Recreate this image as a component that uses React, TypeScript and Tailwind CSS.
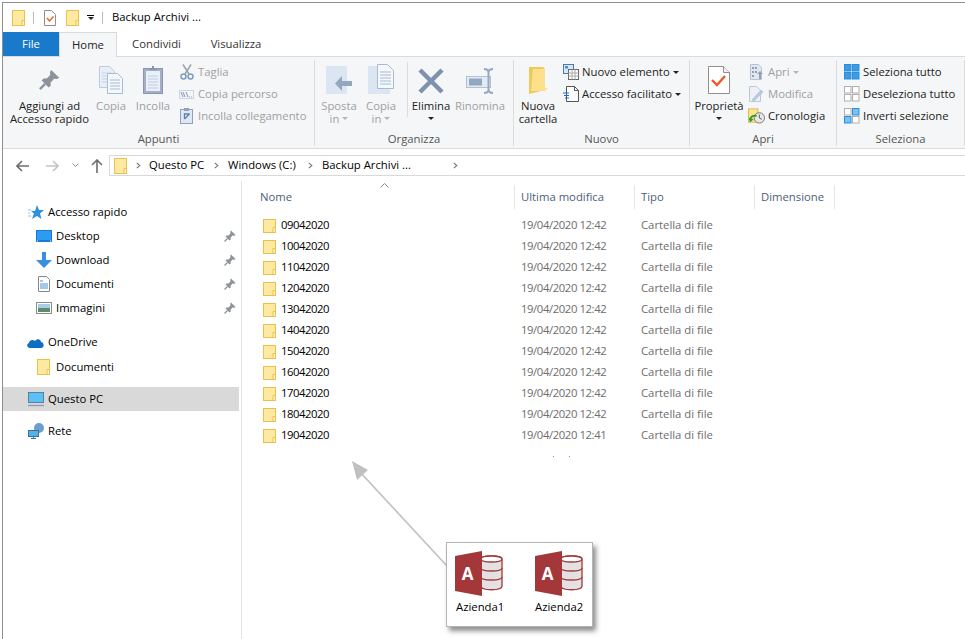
const FONT = "font-['Open_Sans',sans-serif]";

const files = [
  ["09042020", "12:42"],
  ["10042020", "12:42"],
  ["11042020", "12:42"],
  ["12042020", "12:42"],
  ["13042020", "12:42"],
  ["14042020", "12:42"],
  ["15042020", "12:42"],
  ["16042020", "12:42"],
  ["17042020", "12:42"],
  ["18042020", "12:42"],
  ["19042020", "12:41"],
];

const Folder = ({ w = 13, h = 15 }: { w?: number; h?: number }) => (
  <svg width={w} height={h} viewBox={`0 0 13 ${h}`} className="shrink-0">
    <rect x="0.5" y="0.5" width="12" height={h - 1} fill="#fde9a0" stroke="#eac14f" />
    <path d={`M10 ${h - 5.500}h2.500v5H10z`} fill="#fff3c4" stroke="#eac14f" />
  </svg>
);

const Caret = () => <span className="inline-block border-x-[3px] border-t-[3px] border-x-transparent border-t-[#222]" />;
const GrayCaret = () => <span className="inline-block border-x-[3px] border-t-[3px] border-x-transparent border-t-[#b5b5b5]" />;

const Chevron = () => (
  <svg width="5" height="7" viewBox="0 0 5 7" className="shrink-0">
    <path d="m.8.800 3 2.700-3 2.700" fill="none" stroke="#777" strokeWidth="1.100" />
  </svg>
);

const Pin = ({ size = 12, color = "#8d939b" }: { size?: number; color?: string }) => (
  <svg width={size} height={size} viewBox="0 0 12 12">
    <path d="M7 0.5 11.5 5 10.3 5.700 8.600 5.600 6.600 7.800 6.700 9.600 5.500 10.500 1.500 6.500 2.600 5.400 4.400 5.400 6.400 3.400 6.300 1.700Z" fill={color} />
    <path d="M3.500 8.500 0.500 11.500" stroke={color} strokeWidth="1.300" />
  </svg>
);

const Doc = () => (
  <svg width="22" height="28" viewBox="0 0 22 28">
    <path d="M.5.500h15l6 6v21H.5z" fill="#fff" stroke="#8f8f8f" />
    <path d="M15.500.500v6h6" fill="#f1f1f1" stroke="#8f8f8f" />
    <path d="m4 14 5 5 8-9" fill="none" stroke="#ee5a22" strokeWidth="2.400" />
  </svg>
);

const SmallDocCheck = () => (
  <svg width="12" height="16" viewBox="0 0 12 16">
    <path d="M.5.500h7l4 4v11H.5z" fill="#fff" stroke="#8f8f8f" />
    <path d="m3 8 2.500 3L9.500 6.500" fill="none" stroke="#ee5a22" strokeWidth="1.400" />
  </svg>
);

const Copy = () => (
  <svg width="24" height="28" viewBox="0 0 24 28">
    <path d="M.5.500h10l5 5v16H.5z" fill="#e8eef7" stroke="#bccada" />
    <path d="M3 7h9M3 10h9M3 13h9M3 16h9" stroke="#c6d3e4" />
    <path d="M8.500 7.500h10l5 5v15h-15z" fill="#f4f7fb" stroke="#a9bbd1" />
    <path d="M11 14h10M11 17h10M11 20h10M11 23h10" stroke="#a9bbd1" />
  </svg>
);

const Paste = () => (
  <svg width="20" height="29" viewBox="0 0 20 29">
    <rect x="0.500" y="3.500" width="19" height="25" fill="#a3afc4" stroke="#8996ad" />
    <rect x="3" y="6" width="14" height="20" fill="#eaf0f9" />
    <path d="M5 11h10M5 14h10M5 17h10M5 20h10M5 23h10" stroke="#bccce2" />
    <path d="M6 5V3h3V1h2v2h3v2z" fill="#8996ad" />
  </svg>
);

const Scissors = () => (
  <svg width="14" height="16" viewBox="0 0 14 16">
    <path d="M3 .500 9 10M11 .500 5 10" stroke="#9aa3b0" strokeWidth="1.500" fill="none" />
    <circle cx="3.500" cy="12.500" r="2.500" fill="none" stroke="#7d9cc0" strokeWidth="1.500" />
    <circle cx="10.500" cy="12.500" r="2.500" fill="none" stroke="#7d9cc0" strokeWidth="1.500" />
  </svg>
);

const PathIcon = () => (
  <svg width="15" height="9" viewBox="0 0 15 9">
    <rect width="15" height="9" fill="#c9d6e8" />
    <rect x="1" y="1" width="13" height="7" fill="#f2f5fa" />
    <path d="M2 2 4 7M4 2 6 7M7 2 9 7M10 7h.8M12 7h.8" stroke="#7b8ca5" strokeWidth=".9" />
  </svg>
);

const PasteLink = () => (
  <svg width="13" height="16" viewBox="0 0 13 16">
    <rect x="0.500" y="1.500" width="12" height="14" fill="#dfe7f2" stroke="#93a2b8" />
    <rect x="4" y="0" width="5" height="3" fill="#93a2b8" />
    <path d="M4.500 11V6h5" fill="none" stroke="#5e7fa8" strokeWidth="1.300" />
    <path d="m4.500 11 5-5" stroke="#5e7fa8" strokeWidth="1.300" />
  </svg>
);

const MoveTo = () => (
  <svg width="26" height="28" viewBox="0 0 26 28">
    <rect width="21" height="28" fill="#dce6f3" />
    <path d="M26 15H16v-5L9 17.500 16 25v-5h10z" fill="#94a7c0" />
  </svg>
);

const CopyTo = () => (
  <svg width="26" height="30" viewBox="0 0 26 30">
    <rect y="2" width="22" height="28" fill="#dce6f3" />
    <path d="M9.500.500h10l6 6v18h-16z" fill="#f4f7fb" stroke="#a9bbd1" />
    <path d="M12 8h11M12 11h11M12 14h11M12 17h11M12 20h11" stroke="#a9bbd1" />
  </svg>
);

const Rename = () => (
  <svg width="29" height="26" viewBox="0 0 29 26">
    <rect x="0.500" y="8.500" width="24" height="11" fill="#e3eaf4" stroke="#b3c0d2" />
    <rect x="3" y="10.500" width="13" height="7" fill="#94a7c0" />
    <path d="M18 1c3 0 4 1 4.500 2.500C23 2 24 1 27 1M22.500 3v19M18 25c3 0 4-1 4.500-2.500.5 1.500 1.500 2.500 4.500 2.500" fill="none" stroke="#94a7c0" strokeWidth="2" />
  </svg>
);

const NewItem = () => (
  <svg width="16" height="16" viewBox="0 0 16 16">
    <rect x="0.500" y="0.500" width="10" height="9" fill="#d7e7f7" stroke="#4d7ba8" />
    <rect x="2" y="2" width="3" height="2.500" fill="#4d90d0" />
    <rect x="5.500" y="5.500" width="10" height="10" fill="#fff" stroke="#666" />
    <path d="M5.500 9h10M5.500 12h10M9 5.500v10M12 5.500v10" stroke="#aaa" />
  </svg>
);

const EasyAccess = () => (
  <svg width="16" height="16" viewBox="0 0 16 16">
    <path d="M3.500.500h8l4 4v11h-12z" fill="#fff" stroke="#555" />
    <path d="M11.500.500v4h4" fill="none" stroke="#555" />
    <path d="M0 7h6M1 9.500h5M2 12h4" stroke="#1d6fc4" strokeWidth="1.100" />
  </svg>
);

const OpenIcon = () => (
  <svg width="13" height="16" viewBox="0 0 13 16">
    <path d="M.500.500h8l3 3v12h-11z" fill="#e3e8f0" stroke="#b8c3d2" />
    <path d="M2 3h2v2H2zM5 3h2v2H5zM2 7h2v2H2zM2 11h2v2H2zM5 7h2v2H5z" fill="#8fa0b7" />
    <path d="M9 15V10H7l3-3 3 3h-2v5z" fill="#8fa0b7" />
  </svg>
);

const EditIcon = () => (
  <svg width="15" height="16" viewBox="0 0 15 16">
    <path d="M.500.500h7l4 4v11h-11z" fill="#edf1f7" stroke="#bcc8d8" />
    <path d="M3 14 12 4l2 2-9 9z" fill="#b6cbe4" stroke="#9cb3cf" strokeWidth=".5" />
  </svg>
);

const HistoryIcon = () => (
  <svg width="18" height="16" viewBox="0 0 18 16">
    <rect x="0.500" y="0.500" width="10" height="14" fill="#fde58f" stroke="#d9b64d" />
    <circle cx="12" cy="10" r="5.500" fill="#e8e8e8" stroke="#777" />
    <path d="M12 6.500V10l2.500 1.500" stroke="#555" fill="none" />
    <path d="M2 12c1-4 4-5 7-4" stroke="#2e9e2e" strokeWidth="2" fill="none" />
    <path d="m2 15-1-5 5 1.500z" fill="#2e9e2e" />
  </svg>
);

const Grid = ({ cells }: { cells: string[] }) => (
  <svg width="16" height="16" viewBox="0 0 16 16">
    {cells.map((c, i) => {
      const x = i % 2 ? 8.500 : 0.500;
      const y = i < 2 ? 0.500 : 8.500;
      return <rect key={i} x={x} y={y} width="6.500" height="6.500" fill={c} stroke={c === "#fff" ? "#b0b0b0" : "#2b8fdf"} />;
    })}
  </svg>
);

const AccessFile = () => (
  <svg width="48" height="45" viewBox="0 0 48 45">
    <path d="M26 8c0-4 21-4 21 0v27c0 5-21 5-21 0z" fill="#e2e2e2" stroke="#a4373a" strokeWidth="1.300" />
    <path d="M26 8c0 4 21 4 21 0s-21-4-21 0z" fill="#fff" stroke="#a4373a" strokeWidth="1.300" />
    <path d="M26 17c0 4 21 4 21 0M26 26c0 4 21 4 21 0" fill="none" stroke="#a4373a" strokeWidth="1.300" />
    <path d="M0 5 27 0v45L0 40z" fill="#a4373a" />
    <text x="12.500" y="29" textAnchor="middle" fill="#fff" fontFamily="Open Sans" fontWeight="700" fontSize="17">A</text>
  </svg>
);

function RibbonLarge({ icon, lines, dim, caret, className }: { icon: React.ReactNode; lines: string[]; dim?: boolean; caret?: React.ReactNode; className: string }) {
  return (
    <div className={`flex flex-col items-center shrink-0 ${className}`}>
      <div className="h-[34px] flex items-end justify-center">{icon}</div>
      <div className={`mt-[5px] text-center leading-[13px] ${dim ? "text-[#9f9f9f]" : "text-[#222]"}`}>
        {lines.map((l, i) => (
          <div key={l} className="whitespace-nowrap flex items-center justify-center gap-[3px]">
            {l}
            {i === lines.length - 1 && lines.length > 1 && caret}
          </div>
        ))}
        {lines.length === 1 && caret && <div className="flex justify-center h-[13px] items-center">{caret}</div>}
      </div>
    </div>
  );
}

function RibbonSmall({ icon, label, dim, caret }: { icon: React.ReactNode; label: string; dim?: boolean; caret?: React.ReactNode }) {
  return (
    <div className={`h-[22px] flex items-center gap-[3px] whitespace-nowrap ${dim ? "text-[#9f9f9f]" : "text-[#222]"}`}>
      <span className="w-[17px] flex justify-center">{icon}</span>
      {label}
      {caret && <span className="flex">{caret}</span>}
    </div>
  );
}

function Group({ label, width, children }: { label: string; width: string; children: React.ReactNode }) {
  return (
    <div className={`${width} h-[86px] mt-[3px] border-r border-[#dcdcdc] flex flex-col shrink-0`}>
      <div className="h-[70px] flex shrink-0">{children}</div>
      <div className="text-center text-[#555] leading-[18px] shrink-0">{label}</div>
    </div>
  );
}

function NavRow({ icon, label, pin, sub, selected, className = "" }: { icon: React.ReactNode; label: string; pin?: boolean; sub?: boolean; selected?: boolean; className?: string }) {
  return (
    <div className={`h-6 flex items-center shrink-0 ${sub ? "pl-[32px]" : "pl-[24px]"} ${selected ? "bg-[#d9d9d9]" : ""} ${className}`}>
      <span className="w-[17px] flex justify-center mr-[4px]">{icon}</span>
      <span className="text-black flex-1">{label}</span>
      {pin && <span className="mr-[3px] flex"><Pin /></span>}
    </div>
  );
}

export default function App() {
  return (
    <div className={`${FONT} relative w-[965px] h-[639px] overflow-hidden bg-white pl-[2px] pt-[2px] text-[11.3px]`}>
      <div className="h-full border-l border-t border-[#8f8f8f] flex flex-col">
        <div className="h-[29px] flex items-center pl-[9px] shrink-0">
          <Folder w={13} h={16} />
          <span className="ml-[8px] w-px h-3 bg-[#bbb]" />
          <span className="ml-[10px] flex"><SmallDocCheck /></span>
          <span className="ml-[10px] flex"><Folder w={13} h={16} /></span>
          <span className="ml-[8px] flex flex-col items-center gap-[1px]">
            <span className="w-[7px] h-px bg-black" />
            <Caret />
          </span>
          <span className="ml-[8px] w-px h-3 bg-[#bbb]" />
          <span className="ml-[9px] text-black">Backup Archivi ...</span>
        </div>

        <div className="h-[24px] flex shrink-0">
          <div className="w-[56px] bg-[#1979ca] text-white flex items-center justify-center">File</div>
          <div className="w-[58px] border-x border-t border-[#dadbdc] bg-[#f5f6f7] -mb-px z-10 flex items-center justify-center text-[#222]">Home</div>
          <div className="w-[79px] flex items-center justify-center text-[#333]">Condividi</div>
          <div className="w-[80px] flex items-center justify-center text-[#333]">Visualizza</div>
        </div>

        <div className="h-[93px] bg-[#f5f6f7] border-y border-[#dadbdc] flex shrink-0">
          <Group label="Appunti" width="w-[312px]">
            <RibbonLarge icon={<span className="mb-[4px] flex"><Pin size={21} /></span>} lines={["Aggiungi ad", "Accesso rapido"]} className="w-[93px]" />
            <RibbonLarge icon={<Copy />} lines={["Copia"]} dim className="w-[30px]" />
            <RibbonLarge icon={<Paste />} lines={["Incolla"]} dim className="w-[40px] ml-[7px]" />
            <div className="ml-[5px] mt-[1px] flex flex-col">
              <RibbonSmall icon={<Scissors />} label="Taglia" dim />
              <RibbonSmall icon={<PathIcon />} label="Copia percorso" dim />
              <RibbonSmall icon={<PasteLink />} label="Incolla collegamento" dim />
            </div>
          </Group>
          <Group label="Organizza" width="w-[199px]">
            <RibbonLarge icon={<MoveTo />} lines={["Sposta", "in"]} dim caret={<GrayCaret />} className="w-[44px] ml-[2px]" />
            <RibbonLarge icon={<CopyTo />} lines={["Copia", "in"]} dim caret={<GrayCaret />} className="w-[40px]" />
            <span className="w-px h-[55px] bg-[#dcdcdc] ml-[6px] mt-[2px]" />
            <RibbonLarge icon={<svg width="26" height="26" viewBox="0 0 26 26"><path d="m2 2 22 22M24 2 2 24" stroke="#7f92ad" strokeWidth="4.500" /></svg>} lines={["Elimina"]} caret={<Caret />} className="w-[46px]" />
            <RibbonLarge icon={<Rename />} lines={["Rinomina"]} dim className="w-[52px]" />
          </Group>
          <Group label="Nuovo" width="w-[176px]">
            <RibbonLarge icon={<svg width="19" height="27" viewBox="0 0 19 27"><path d="M0 0h14l2 2v21l-16 4z" fill="#eec95f" /><path d="M4 2h12v19h3l-3 3H2z" fill="#fde08a" /></svg>} lines={["Nuova", "cartella"]} className="w-[44px] ml-[2px]" />
            <div className="ml-[2px] mt-[1px] flex flex-col">
              <RibbonSmall icon={<NewItem />} label="Nuovo elemento" caret={<Caret />} />
              <RibbonSmall icon={<EasyAccess />} label="Accesso facilitato" caret={<Caret />} />
            </div>
          </Group>
          <Group label="Apri" width="w-[147px]">
            <RibbonLarge icon={<Doc />} lines={["Proprietà"]} caret={<Caret />} className="w-[54px] ml-[2px]" />
            <div className="ml-[2px] mt-[1px] flex flex-col">
              <RibbonSmall icon={<OpenIcon />} label="Apri" dim caret={<GrayCaret />} />
              <RibbonSmall icon={<EditIcon />} label="Modifica" dim />
              <RibbonSmall icon={<HistoryIcon />} label="Cronologia" />
            </div>
          </Group>
          <Group label="Seleziona" width="w-[128px]">
            <div className="ml-[6px] mt-[1px] flex flex-col">
              <RibbonSmall icon={<Grid cells={["#3f9ae6", "#3f9ae6", "#3f9ae6", "#3f9ae6"]} />} label="Seleziona tutto" />
              <RibbonSmall icon={<Grid cells={["#fff", "#fff", "#fff", "#fff"]} />} label="Deseleziona tutto" />
              <RibbonSmall icon={<Grid cells={["#fff", "#7cc0f0", "#7cc0f0", "#fff"]} />} label="Inverti selezione" />
            </div>
          </Group>
        </div>

        <div className="h-[6px] shrink-0" />
        <div className="h-[21px] flex items-center shrink-0">
          <div className="w-[106px] flex items-center pl-[13px] shrink-0">
            <svg width="13" height="12" viewBox="0 0 13 12"><path d="M6 1 1 6l5 5M1 6h12" fill="none" stroke="#6d6d6d" strokeWidth="1.600" /></svg>
            <svg className="ml-[17px]" width="13" height="12" viewBox="0 0 13 12"><path d="m7 1 5 5-5 5M12 6H0" fill="none" stroke="#c4c4c4" strokeWidth="1.600" /></svg>
            <svg className="ml-[13px]" width="7" height="5" viewBox="0 0 7 5"><path d="m.5.500 3 3 3-3" fill="none" stroke="#909090" /></svg>
            <svg className="ml-[12px]" width="12" height="14" viewBox="0 0 12 14"><path d="M1 6l5-5 5 5M6 1v13" fill="none" stroke="#6d6d6d" strokeWidth="1.600" /></svg>
          </div>
          <div className="flex-1 h-[21px] border-y border-l border-[#d9d9d9] flex items-center pl-[4px] text-black">
            <Folder w={13} h={16} />
            <span className="ml-[9px] flex"><Chevron /></span>
            <span className="ml-[8px] w-[65px]">Questo PC</span>
            <Chevron />
            <span className="ml-[9px] w-[80px]">Windows (C:)</span>
            <Chevron />
            <span className="ml-[9px] w-[131px]">Backup Archivi ...</span>
            <Chevron />
          </div>
        </div>

        <div className="flex-1 flex min-h-0 mt-[5px]">
          <div className="w-[239px] border-r border-[#e5e5e5] pt-[19px] shrink-0 flex flex-col">
            <div className="w-[236px] flex flex-col">
              <NavRow label="Accesso rapido" icon={
                <svg width="16" height="15" viewBox="0 0 16 15"><path d="m9 0 2 5h5l-4 3.500L13.500 14 9 11l-5 3 2-5.500L3 6h4z" fill="#2f8fe0" /><path d="M0 5h3M0 8h2M0 11h3" stroke="#8cc4f0" /></svg>
              } />
              <NavRow sub label="Desktop" pin icon={
                <svg width="16" height="12" viewBox="0 0 16 12"><rect width="16" height="12" fill="#1e78d8" /><rect x="1" y="1" width="14" height="9" fill="#2c9cf2" /><path d="M1 11h1M14 11h1" stroke="#fff" /></svg>
              } />
              <NavRow sub label="Download" pin icon={
                <svg width="16" height="16" viewBox="0 0 16 16"><path d="M6 0h4v8h6l-8 8-8-8h6z" fill="#3a8ee0" /></svg>
              } />
              <NavRow sub label="Documenti" pin icon={
                <svg width="12" height="16" viewBox="0 0 12 16"><path d="M.5.500h8l3 3v12H.5z" fill="#fff" stroke="#8a8a8a" /><path d="M2 5h3M2 8h8M2 10h8M2 12h8" stroke="#4d8fd0" /></svg>
              } />
              <NavRow sub label="Immagini" pin icon={
                <svg width="16" height="12" viewBox="0 0 16 12"><rect x="0.500" y="0.500" width="15" height="11" fill="#fff" stroke="#8a8a8a" /><rect x="2" y="2" width="12" height="4" fill="#a8cde8" /><rect x="2" y="6" width="12" height="4" fill="#5e8a6e" /></svg>
              } />
              <NavRow className="mt-[10px]" label="OneDrive" icon={
                <svg width="17" height="11" viewBox="0 0 17 11"><path d="M3 11C0 11-1 7 2 6c0-3 4-4 6-2 2-3 6-2 6 1 3 0 4 6 0 6z" fill="#0d6fc4" /></svg>
              } />
              <NavRow className="mt-px" sub label="Documenti" icon={<Folder w={13} h={16} />} />
              <NavRow className="mt-[8px]" selected label="Questo PC" icon={
                <svg width="16" height="15" viewBox="0 0 16 15"><rect x="0.500" y="0.500" width="15" height="10" fill="#5cc0f5" stroke="#5d7f9c" /><path d="M0 13.500h16" stroke="#8aa0b5" strokeWidth="1.400" /></svg>
              } />
              <NavRow className="mt-[8px]" label="Rete" icon={
                <svg width="16" height="16" viewBox="0 0 16 16"><circle cx="11" cy="5" r="5" fill="#6a9fd0" /><rect x="0.500" y="7.500" width="10" height="6" fill="#4fb4ea" stroke="#3d6f98" /><path d="M5.500 14v2M3 15.500h5" stroke="#3d6f98" /></svg>
              } />
            </div>
          </div>

          <div className="flex-1 relative">
            <svg className="absolute left-[138px] top-[2px]" width="9" height="5" viewBox="0 0 9 5"><path d="m.5 4.500 4-4 4 4" fill="none" stroke="#888" /></svg>
            <div className="h-[24px] mt-[4px] flex text-[#4c607a]">
              <div className="w-[273px] pl-[18px] border-r border-[#e5e5e5] flex items-center">Nome</div>
              <div className="w-[120px] pl-[6px] border-r border-[#e5e5e5] flex items-center whitespace-nowrap">Ultima modifica</div>
              <div className="w-[120px] pl-[6px] border-r border-[#e5e5e5] flex items-center">Tipo</div>
              <div className="w-[80px] pl-[6px] border-r border-[#e5e5e5] flex items-center">Dimensione</div>
            </div>
            <div className="mt-[6px] flex flex-col">
              {files.map(([name, time]) => (
                <div key={name} className="h-[21px] flex items-center">
                  <div className="w-[273px] pl-[21px] flex items-center gap-[5px] text-black tracking-[-0.45px]">
                    <Folder w={13} h={14} />
                    {name}
                  </div>
                  <div className="w-[120px] pl-[6px] text-[#6d6d6d] whitespace-nowrap tracking-[-0.4px]">19/04/2020 {time}</div>
                  <div className="w-[120px] pl-[6px] text-[#6d6d6d]">Cartella di file</div>
                </div>
              ))}
            </div>
          </div>
        </div>
      </div>

      <svg className="absolute left-[350px] top-[460px] pointer-events-none" width="100" height="110" viewBox="0 0 100 110">
        <path d="M97 106 10 12" stroke="#c0c0c0" strokeWidth="1.600" />
        <path d="M2 1 18 10 7 20z" fill="#c0c0c0" />
      </svg>
      <span className="absolute left-[553px] top-[456px] w-px h-px bg-[#8f7fc0]" />
      <span className="absolute left-[569px] top-[456px] w-px h-px bg-[#8f7fc0]" />
      <div className="absolute left-[446px] top-[542px] w-[147px] h-[85px] bg-white border border-[#b4b4b4] shadow-[3px_4px_5px_rgba(0,0,0,0.45)] flex pt-[8px] pl-[8px] text-black">
        <div className="w-[80px] flex flex-col items-start">
          <AccessFile />
          <span className="mt-[3px] ml-px">Azienda1</span>
        </div>
        <div className="flex flex-col items-start">
          <AccessFile />
          <span className="mt-[3px]">Azienda2</span>
        </div>
      </div>
    </div>
  );
}
